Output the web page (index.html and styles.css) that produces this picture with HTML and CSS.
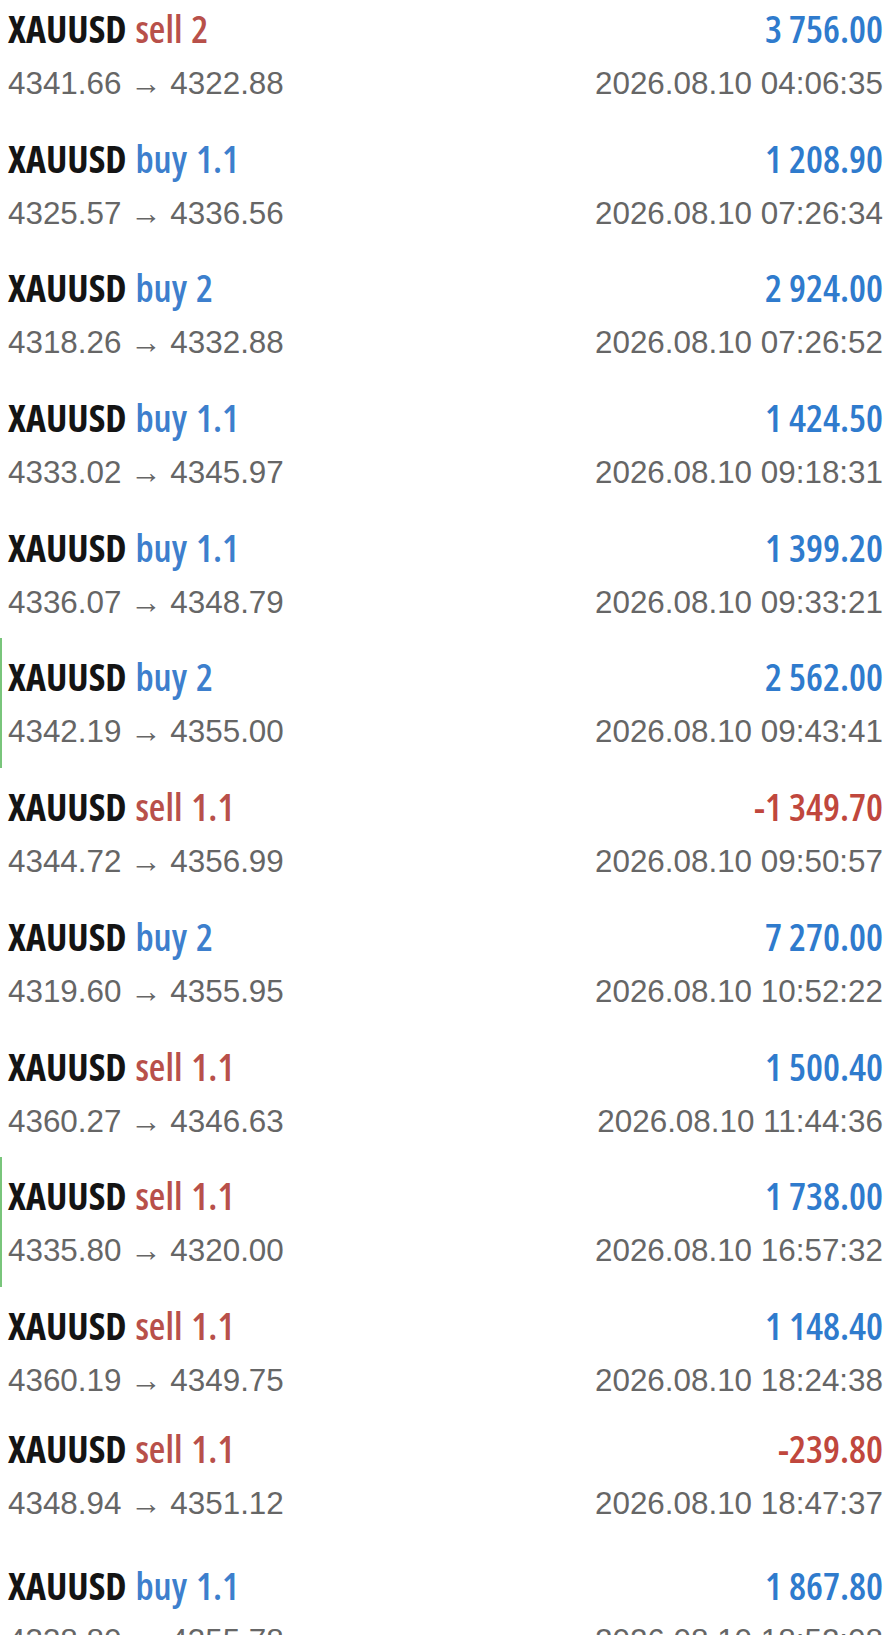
FILE: index.html
```html
<!DOCTYPE html>
<html>
<head>
<meta charset="utf-8">
<link rel="stylesheet" href="styles.css">
</head>
<body>
<div class="list">
  <div class="row">
    <div class="line"><span class="sym">XAUUSD <span class="sell">sell 2</span></span><span class="amt pos">3 756.00</span></div>
    <div class="line sub"><span>4341.66 → 4322.88</span><span>2026.08.10 04:06:35</span></div>
  </div>
  <div class="row">
    <div class="line"><span class="sym">XAUUSD <span class="buy">buy 1.1</span></span><span class="amt pos">1 208.90</span></div>
    <div class="line sub"><span>4325.57 → 4336.56</span><span>2026.08.10 07:26:34</span></div>
  </div>
  <div class="row">
    <div class="line"><span class="sym">XAUUSD <span class="buy">buy 2</span></span><span class="amt pos">2 924.00</span></div>
    <div class="line sub"><span>4318.26 → 4332.88</span><span>2026.08.10 07:26:52</span></div>
  </div>
  <div class="row">
    <div class="line"><span class="sym">XAUUSD <span class="buy">buy 1.1</span></span><span class="amt pos">1 424.50</span></div>
    <div class="line sub"><span>4333.02 → 4345.97</span><span>2026.08.10 09:18:31</span></div>
  </div>
  <div class="row">
    <div class="line"><span class="sym">XAUUSD <span class="buy">buy 1.1</span></span><span class="amt pos">1 399.20</span></div>
    <div class="line sub"><span>4336.07 → 4348.79</span><span>2026.08.10 09:33:21</span></div>
  </div>
  <div class="row marked">
    <div class="line"><span class="sym">XAUUSD <span class="buy">buy 2</span></span><span class="amt pos">2 562.00</span></div>
    <div class="line sub"><span>4342.19 → 4355.00</span><span>2026.08.10 09:43:41</span></div>
  </div>
  <div class="row">
    <div class="line"><span class="sym">XAUUSD <span class="sell">sell 1.1</span></span><span class="amt neg">-1 349.70</span></div>
    <div class="line sub"><span>4344.72 → 4356.99</span><span>2026.08.10 09:50:57</span></div>
  </div>
  <div class="row">
    <div class="line"><span class="sym">XAUUSD <span class="buy">buy 2</span></span><span class="amt pos">7 270.00</span></div>
    <div class="line sub"><span>4319.60 → 4355.95</span><span>2026.08.10 10:52:22</span></div>
  </div>
  <div class="row">
    <div class="line"><span class="sym">XAUUSD <span class="sell">sell 1.1</span></span><span class="amt pos">1 500.40</span></div>
    <div class="line sub"><span>4360.27 → 4346.63</span><span>2026.08.10 11:44:36</span></div>
  </div>
  <div class="row marked">
    <div class="line"><span class="sym">XAUUSD <span class="sell">sell 1.1</span></span><span class="amt pos">1 738.00</span></div>
    <div class="line sub"><span>4335.80 → 4320.00</span><span>2026.08.10 16:57:32</span></div>
  </div>
  <div class="row row-short">
    <div class="line"><span class="sym">XAUUSD <span class="sell">sell 1.1</span></span><span class="amt pos">1 148.40</span></div>
    <div class="line sub"><span>4360.19 → 4349.75</span><span>2026.08.10 18:24:38</span></div>
  </div>
  <div class="row row-tall">
    <div class="line"><span class="sym">XAUUSD <span class="sell">sell 1.1</span></span><span class="amt neg">-239.80</span></div>
    <div class="line sub"><span>4348.94 → 4351.12</span><span>2026.08.10 18:47:37</span></div>
  </div>
  <div class="row">
    <div class="line"><span class="sym">XAUUSD <span class="buy">buy 1.1</span></span><span class="amt pos">1 867.80</span></div>
    <div class="line sub"><span>4338.80 → 4355.78</span><span>2026.08.10 18:52:08</span></div>
  </div>
</div>
</body>
</html>
```
FILE: styles.css
```css
html, body {
  margin: 0;
  padding: 0;
  background: #ffffff;
  overflow: hidden;
}

.list {
  display: flex;
  flex-direction: column;
  margin-top: -10px;
}

.row {
  box-sizing: border-box;
  height: 129.7px;
  padding: 16px 11px 0 8px;
  display: flex;
  flex-direction: column;
}

.row-short { height: 123px; }
.row-tall { height: 137px; }

.marked {
  box-shadow: inset 2px 0 0 #79c57b;
}

.line {
  display: flex;
  justify-content: space-between;
  align-items: baseline;
  font-family: "Open Sans", "Roboto", sans-serif;
  font-stretch: 75%;
  font-weight: 700;
  font-size: 38px;
  line-height: 44px;
  color: #141414;
  white-space: nowrap;
}

.sym { word-spacing: 2px; }

.sell { color: #b8504a; font-weight: 600; font-stretch: 87%; }
.buy { color: #3d7fcd; font-weight: 600; font-stretch: 87%; }

.amt { font-weight: 600; font-stretch: 86%; }
.pos { color: #2f7bcd; }
.neg { color: #c0473d; }

.sub {
  margin-top: 16px;
  font-family: "Liberation Sans", Arial, sans-serif;
  font-stretch: normal;
  font-weight: 400;
  font-size: 31.4px;
  line-height: 36px;
  color: #666666;
}
```
